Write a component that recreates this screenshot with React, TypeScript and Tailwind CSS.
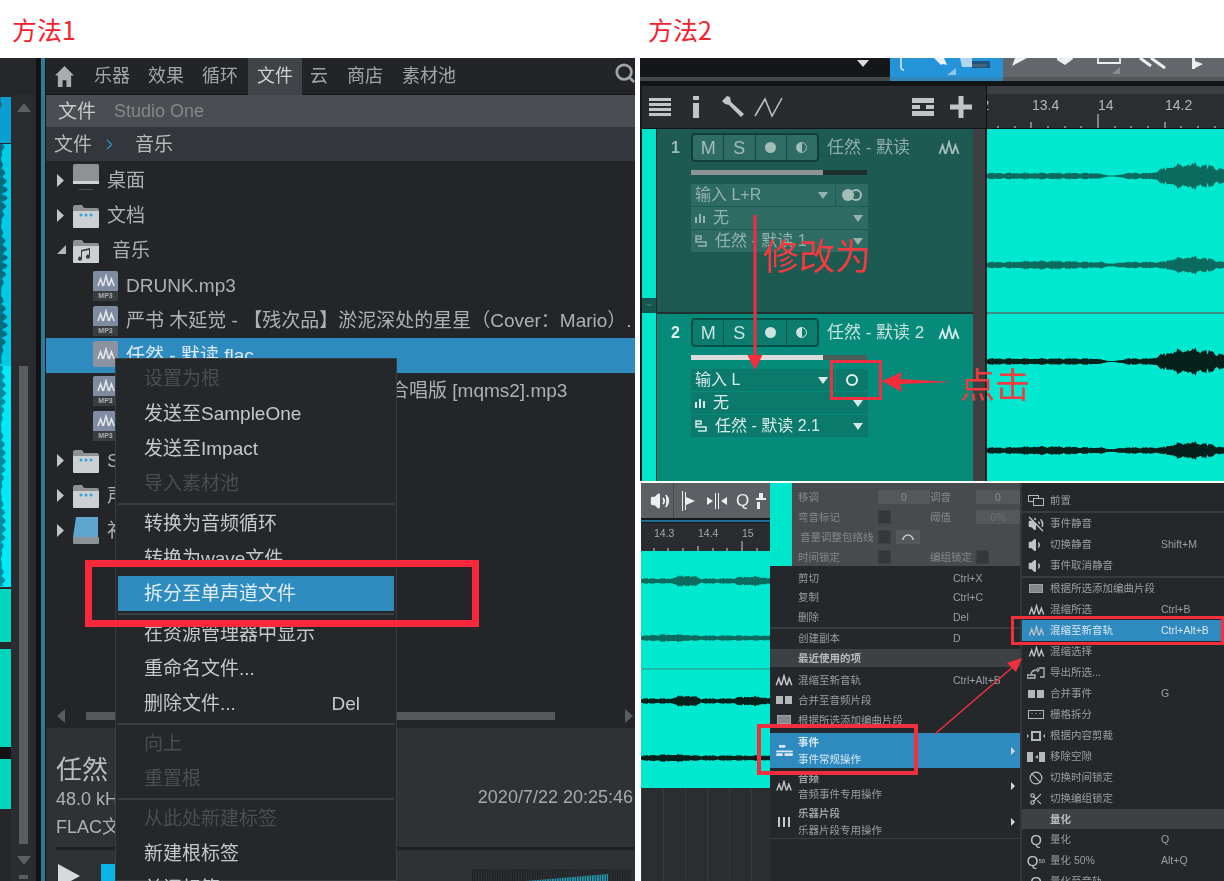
import React from 'react';
import { Search, Volume2, VolumeOff, Volume1, Ban, Scissors, ChevronRight } from 'lucide-react';

// deterministic jagged waveform, thin line with a couple of swells
const wavePath = (w: number, cy: number, base: number, swells: [number, number, number][]) => {
  const amp = (x: number) => {
    let a = base;
    for (const [c, r, h] of swells) {
      const d = Math.abs(x - c) / r;
      if (d < 1) a += h * (1 - d * d);
    }
    return Math.max(0.3, a) * (0.6 + 0.4 * Math.abs(Math.sin(x * 2.3) * Math.cos(x * 0.9 + 1)) + 0.25 * Math.abs(Math.sin(x * 0.37)));
  };
  let top = `M0 ${cy}`;
  let bottom = '';
  for (let x = 0; x <= w; x += 1.5) {
    top += `L${x} ${(cy - amp(x)).toFixed(1)}`;
    bottom = `L${x} ${(cy + amp(x)).toFixed(1)}` + bottom;
  }
  return top + bottom + 'Z';
};

// same idea for the clipped vertical wave at the far left
const stripPath = (y0: number, y1: number, base: number, peak: number) => {
  let d = `M0 ${y0}`;
  for (let y = y0; y <= y1; y += 2) {
    d += `L${(base + peak * Math.abs(Math.sin(y * 0.37) * Math.cos(y * 0.047))).toFixed(1)} ${y}`;
  }
  return d + `L0 ${y1}Z`;
};

const WaveIcon = ({ className = 'w-[20px] h-[15px]' }: { className?: string }) => (
  <svg viewBox="0 0 20 15" className={className} fill="none" stroke="currentColor" strokeWidth="1.700">
    <path d="M1 13l3-8 2.500 8M7 13l3-11 3 11M13.500 13l2.500-8 3 8" />
  </svg>
);

const Mp3Icon = ({ flac }: { flac?: boolean }) =>
  flac ? (
    <div className="w-[25px] h-[26px] shrink-0 mb-[4px] bg-[#8b93a1] rounded-[2px] flex items-center justify-center text-[#e4e7ea]">
      <WaveIcon className="w-[18px] h-[14px]" />
    </div>
  ) : (
    <div className="w-[25px] h-[30px] shrink-0 flex flex-col">
      <div className="h-[20px] bg-[#7f8ba0] rounded-t-[2px] flex items-center justify-center text-[#e4e7ea]">
        <WaveIcon className="w-[18px] h-[14px]" />
      </div>
      <div className="h-[10px] bg-[#3a3d40] text-[7px] leading-[10px] font-bold text-center text-[#aeb1b4]">MP3</div>
    </div>
  );

const Arrow = ({ open }: { open?: boolean }) =>
  open ? (
    <svg viewBox="0 0 9 9" className="w-[9px] h-[9px] shrink-0 -mt-[3px]"><path d="M9 0v9H0z" fill="#b4b7ba" /></svg>
  ) : (
    <svg viewBox="0 0 7 13" className="w-[7px] h-[13px] shrink-0"><path d="M0 0l7 6.500-7 6.500z" fill="#c2c5c8" /></svg>
  );

const TreeIcon = ({ kind }: { kind: string }) => {
  if (kind === 'desk')
    return (
      <svg viewBox="0 0 26 28" className="w-[26px] h-[28px] shrink-0 -mt-[6px]">
        <rect x="0" y="0" width="26" height="20" rx="2" fill="#8f9194" />
        <rect x="0" y="17" width="26" height="3" fill="#d1d3d5" />
        <rect x="6" y="25" width="14" height="1" fill="#4e5053" />
      </svg>
    );
  if (kind === 'drive')
    return (
      <svg viewBox="0 0 26 28" className="w-[26px] h-[28px] shrink-0">
        <path d="M3 0h22v20H0z" fill="#5fa6cf" />
        <rect x="0" y="20" width="26" height="7" rx="1" fill="#8b9296" />
      </svg>
    );
  return (
    <svg viewBox="0 0 26 24" className="w-[26px] h-[24px] shrink-0">
      <path d="M0 3q0-2 2-2h7l2 3h13q2 0 2 2v2H0z" fill="#8e9194" />
      <rect x="0" y="7" width="26" height="17" rx="1" fill="#cdd0d2" />
      {kind === 'music' ? (
        <path d="M9 20a2 2 0 1 1-1-2v-7l9-2v9a2 2 0 1 1-1-2v-5l-7 1.500z" fill="#3a3c3f" />
      ) : (
        <g fill="#2ea7d8"><circle cx="8" cy="11" r="1.500" /><circle cx="13" cy="11" r="1.500" /><circle cx="18" cy="11" r="1.500" /></g>
      )}
    </svg>
  );
};

const Tree = ({ kind, text, open, nudge }: { kind: string; text: string; open?: boolean; nudge?: boolean }) => (
  <div className="h-[35px] flex items-center pl-[11px]">
    <div className="w-[16px] flex items-center"><Arrow open={open} /></div>
    <TreeIcon kind={kind} />
    <span className={nudge ? 'ml-[13px]' : 'ml-[8px]'}>{text}</span>
  </div>
);

const FileRow = ({ text, selected, gap }: { text: string; selected?: boolean; gap?: boolean }) => (
  <div className={`h-[35px] flex items-center pl-[47px] whitespace-nowrap overflow-hidden ${selected ? 'bg-[#2e8bc0] text-[#dbe9f2]' : ''}`}>
    <Mp3Icon flac={selected} />
    <span className={gap ? 'ml-[272px]' : 'ml-[8px]'}>{text}</span>
  </div>
);

const MenuRow = ({ text, off, hot, right, cut }: { text: string; off?: boolean; hot?: boolean; right?: string; cut?: boolean }) => (
  <div className={`${cut ? 'h-[20px] items-start leading-[35px] overflow-hidden mb-[15px]' : 'h-[35px] items-center'} flex pl-[26px] mx-[2px] whitespace-nowrap ${off ? 'text-[#4b4e51]' : 'text-[#c6c8ca]'} ${hot ? 'bg-[#2f8cc1] text-[#e2eef6]' : ''}`}>
    <span>{text}</span>
    {right && <span className="ml-auto mr-[34px]">{right}</span>}
  </div>
);

const MenuSep = () => (
  <div className="h-[5px] flex items-center mx-[2px]"><div className="h-[2px] w-full bg-[#3b3e41]" /></div>
);

const Strip = () => (
  <svg viewBox="0 0 11 823" className="w-[11px] h-[823px] shrink-0">
    <rect width="11" height="823" fill="#25272a" />
    <rect y="39" width="11" height="46" fill="#0a9fd2" />
    <path d={stripPath(39, 50, 0, 3)} fill="#2b5f73" />
    <rect y="86" width="11" height="222" fill="#00cbe6" />
    <path d={stripPath(86, 306, 1, 7)} fill="#066c80" />
    <rect y="308" width="11" height="221" fill="#00e9f6" />
    <path d={stripPath(308, 528, 1, 5)} fill="#078a9e" />
    <rect y="531" width="11" height="53" fill="#00d6bc" />
    <rect y="591" width="11" height="98" fill="#00d6bc" />
    <rect y="689" width="11" height="12" fill="#101213" />
    <rect y="701" width="11" height="50" fill="#00d6bc" />
  </svg>
);

const MethodOne = () => (
  <div className="w-[635px] h-[823px] flex overflow-hidden relative text-[19px] leading-none bg-[#232528] text-[#aeb1b4] blur-[0.5px]">
    <Strip />
    <div className="w-[25px] bg-[#2a2c2f] flex flex-col items-center border-t-[37px] border-[#25272a] pt-[8px]">
      <div className="w-0 h-0 border-x-[7px] border-x-transparent border-b-[9px] border-b-[#5d6063]" />
      <div className="w-[9px] h-[478px] bg-[#5b5e61] mt-[254px]" />
      <div className="w-0 h-0 border-x-[7px] border-x-transparent border-t-[9px] border-t-[#5d6063] mt-[12px]" />
      <div className="w-[9px] h-[4px] bg-[#5b5e61] mt-[10px]" />
    </div>
    <div className="w-[10px] flex">
      <div className="w-[5px] bg-[#101214]" />
      <div className="w-[4px] bg-[#2b7d96]" />
      <div className="w-[1px] bg-[#17191b]" />
    </div>
    <div className="flex-1 flex flex-col min-w-0">
      <div className="h-[37px] flex items-center pl-[9px] shrink-0 bg-[#222427] border-b border-[#131517] text-[#a2a5a8] text-[18px]">
        <svg viewBox="0 0 20 22" className="w-[19px] h-[21px] text-[#a9acae]"><path d="M10 0l10 10h-3v12h-5v-7H8v7H3V10H0z" fill="currentColor" /></svg>
        <span className="ml-[20px]">乐器</span>
        <span className="ml-[18px]">效果</span>
        <span className="ml-[18px]">循环</span>
        <span className="ml-[10px] w-[54px] h-[37px] flex items-center justify-center bg-[#404347] text-[#cfd1d3]">文件</span>
        <span className="ml-[8px]">云</span>
        <span className="ml-[19px]">商店</span>
        <span className="ml-[19px]">素材池</span>
        <Search size={22} strokeWidth={3} className="ml-auto -mr-[1px] -mt-[6px]" />
      </div>
      <div className="h-[32px] flex items-center pl-[12px] shrink-0 bg-[#4a4e52]">
        <span className="text-[#c9cbcd]">文件</span>
        <span className="ml-[18px] text-[#85888b] text-[18px]">Studio One</span>
      </div>
      <div className="h-[34px] flex items-center pl-[8px] shrink-0 bg-[#33363a] text-[#b9bbbd]">
        <span>文件</span>
        <ChevronRight size={17} className="ml-[9px] text-[#2b8ec4]" />
        <span className="ml-[17px]">音乐</span>
      </div>
      <div className="h-[543px] pt-[2px] shrink-0 overflow-hidden">
        <Tree kind="desk" text="桌面" />
        <Tree kind="docs" text="文档" />
        <Tree kind="music" text="音乐" open nudge />
        <FileRow text="DRUNK.mp3" />
        <FileRow text="严书 木延觉 - 【残次品】淤泥深处的星星（Cover：Mario）." />
        <FileRow text="任然 - 默读.flac" selected />
        <FileRow text="合唱版 [mqms2].mp3" gap />
        <FileRow text="" />
        <Tree kind="docs" text="Studio One" />
        <Tree kind="docs" text="声音" />
        <Tree kind="drive" text="补丁" />
      </div>
      <div className="h-[24px] flex items-center pl-[11px] pr-[2px] shrink-0 text-[#5a5d60]">
        <svg viewBox="0 0 8 14" className="w-[8px] h-[14px]"><path d="M8 0L0 7l8 7z" fill="currentColor" /></svg>
        <div className="h-[8px] w-[469px] ml-[21px] bg-[#55585b]" />
        <svg viewBox="0 0 8 14" className="w-[8px] h-[14px] ml-auto"><path d="M0 0l8 7-8 7z" fill="currentColor" /></svg>
      </div>
      <div className="flex-1 bg-[#2f3235] flex flex-col pl-[10px] text-[18px]">
        <div className="flex justify-between">
          <div className="pt-[27px]">
            <div className="h-[30px] text-[26px] leading-[30px] text-[#babcbe]">任然 -</div>
            <div className="h-[28px] leading-[28px]">48.0 kHz</div>
            <div className="h-[28px] leading-[28px]">FLAC文件</div>
          </div>
          <div className="pt-[60px] pr-[2px] text-[18px] text-[#a6a9ab]">2020/7/22 20:25:46</div>
        </div>
        <div className="h-[3px] mt-[6px] bg-[#1e2022]" />
        <div className="flex items-start flex-1 pt-[14px]">
          <svg viewBox="0 0 22 24" className="w-[22px] h-[24px] ml-[2px]"><path d="M0 0l22 12L0 24z" fill="#d7d9db" /></svg>
          <div className="w-[14px] h-[20px] ml-[21px] bg-[#08b5e6]" />
          <svg viewBox="0 0 160 14" className="ml-auto mt-[5px] w-[160px] h-[14px] mr-[3px]">
            <rect width="160" height="14" fill="url(#s1)" />
            <defs>
              <pattern id="s1" width="2.500" height="14" patternUnits="userSpaceOnUse"><rect width="1.200" height="14" fill="#1e2124" /></pattern>
              <pattern id="s2" width="2.500" height="14" patternUnits="userSpaceOnUse"><rect width="1.600" height="14" fill="#1a9db8" /></pattern>
            </defs>
            <path d="M30 14L136 5v9z" fill="url(#s2)" />
          </svg>
        </div>
      </div>
    </div>

    {/* context menu */}
    <div className="absolute left-[115px] top-[300px] w-[282px] h-[523px] pt-[2px] bg-[#25282b] border border-[#3a3d40]">
      <MenuRow text="设置为根" off />
      <MenuRow text="发送至SampleOne" />
      <MenuRow text="发送至Impact" />
      <MenuRow text="导入素材池" off />
      <MenuSep />
      <MenuRow text="转换为音频循环" />
      <MenuRow text="转换为wave文件" cut />
      <MenuRow text="拆分至单声道文件" hot />
      <MenuSep />
      <MenuRow text="在资源管理器中显示" />
      <MenuRow text="重命名文件..." />
      <MenuRow text="删除文件..." right="Del" />
      <MenuSep />
      <MenuRow text="向上" off />
      <MenuRow text="重置根" off />
      <MenuSep />
      <MenuRow text="从此处新建标签" off />
      <MenuRow text="新建根标签" />
      <MenuRow text="关闭标签" />
    </div>
    <div className="absolute left-[85px] top-[502px] w-[394px] h-[67px] border-[7px] border-[#f9283b]" />
  </div>
);

const SelectRow = ({ icon, text, tone }: { icon?: React.ReactNode; text: string; tone: string }) => (
  <div className={`h-[22px] flex items-center pl-[4px] pr-[4px] mb-[1px] ${tone}`}>
    {icon}
    <span className={icon ? 'ml-[8px]' : ''}>{text}</span>
    <div className="ml-auto w-0 h-0 border-x-[5px] border-x-transparent border-t-[7px] border-t-current mr-[1px]" />
  </div>
);

const BarsIcon = () => (
  <svg viewBox="0 0 10 10" className="w-[10px] h-[10px]" fill="currentColor"><path d="M0 4h2v6H0zM4 1h2v9H4zM8 3h2v7H8z" /></svg>
);
const RouteIcon = () => (
  <svg viewBox="0 0 12 12" className="w-[12px] h-[12px]" fill="none" stroke="currentColor" strokeWidth="1.500"><path d="M1 1h5v3H1zM1 4v3h10v4H3" /></svg>
);

const Track = ({ n, name, input, out, lit }: { n: number; name: string; input: string; out: string; lit?: boolean }) => {
  const tone = lit ? 'bg-[#0b7a6d] text-[#d6ebe7]' : 'bg-[#2e6b63] text-[#95b3ae]';
  const cell = `flex-1 h-full flex items-center justify-center border-l first:border-l-0 ${lit ? 'border-[#05574d] text-[#cbe3df]' : 'border-[#164a43] text-[#a5bdb9]'}`;
  return (
    <div className={`${lit ? 'h-[168px] bg-[#068b7b]' : 'h-[185px] bg-[#1c5a52] border-b-2 border-[#21302e]'} shrink-0 pt-[4px] text-[16px] leading-none`}>
      <div className="flex items-center h-[29px]">
        <div className={`w-[34px] pl-[14px] font-bold ${lit ? 'text-[#e0efec]' : 'text-[#9bb8b3]'}`}>{n}</div>
        <div className={`w-[128px] h-full flex rounded-[4px] border-2 text-[18px] ${lit ? 'bg-[#0c7c6f] border-[#055046]' : 'bg-[#2f6c64] border-[#123f39]'}`}>
          <div className={cell}>M</div>
          <div className={cell}>S</div>
          <div className={cell}><div className="w-[11px] h-[11px] rounded-full bg-current" /></div>
          <div className={cell}><div className="w-[11px] h-[11px] rounded-full border border-current bg-[linear-gradient(90deg,currentColor_50%,transparent_50%)]" /></div>
        </div>
        <span className={`ml-[8px] text-[17px] ${lit ? 'text-[#cbe3df]' : 'text-[#8fafa9]'}`}>{name}</span>
        <WaveIcon className={`ml-auto mr-[13px] w-[22px] h-[16px] ${lit ? 'text-[#d6ebe7]' : 'text-[#a5bdb9]'}`} />
      </div>
      <div className={`ml-[34px] w-[176px] h-[5px] mt-[8px] ${lit ? 'bg-[#4a5f5c]' : 'bg-[#1d2e2d]'}`}>
        <div className={`h-full w-[132px] ${lit ? 'bg-[#d9dcdb]' : 'bg-[#8e9496]'}`} />
      </div>
      <div className="ml-[34px] w-[177px] mt-[9px]">
        <div className="flex h-[22px] mb-[1px]">
          <div className={`flex-1 flex items-center pl-[4px] pr-[7px] ${tone}`}>
            <span>{input}</span>
            <div className="ml-auto w-0 h-0 border-x-[5px] border-x-transparent border-t-[7px] border-t-current" />
          </div>
          <div className={`w-[32px] ml-[1px] flex items-center justify-center ${tone}`}>
            {lit ? (
              <div className="w-[12px] h-[12px] rounded-full border-2 border-[#e5f1ef]" />
            ) : (
              <div className="flex">
                <div className="w-[12px] h-[12px] rounded-full bg-[#a5bdb9]" />
                <div className="w-[12px] h-[12px] -ml-[4px] rounded-full border-2 border-[#a5bdb9]" />
              </div>
            )}
          </div>
        </div>
        <SelectRow icon={<BarsIcon />} text="无" tone={tone} />
        <SelectRow icon={<RouteIcon />} text={out} tone={tone} />
      </div>
    </div>
  );
};

const TrackWave = ({ h, y1, y2, fill }: { h: number; y1: number; y2: number; fill: string }) => (
  <svg viewBox={`0 0 237 ${h}`} className="w-full h-full block">
    <path d={wavePath(237, y1, 3, [[125, 14, -2.5], [205, 40, 9]])} fill={fill} />
    <path d={wavePath(237, y2, 3, [[125, 10, -1.5], [205, 30, 5], [60, 40, 1]])} fill={fill} />
  </svg>
);

const MethodTwoTop = () => (
  <div className="h-[423px] flex flex-col overflow-hidden relative bg-[#15171a] blur-[0.4px]">
    <div className="h-[23px] flex shrink-0">
      <div className="w-[250px] flex items-start justify-end pr-[21px] bg-[#14161a] border-b-[4px] border-[#45484b]">
        <div className="w-0 h-0 mt-[2px] border-x-[6px] border-x-transparent border-t-[7px] border-t-[#d9dbdd]" />
      </div>
      <svg viewBox="0 0 113 23" className="w-[113px] h-[23px]">
        <rect width="113" height="23" fill="#2493d8" />
        <rect y="19" width="113" height="4" fill="#2f87bc" />
        <path d="M11 0v9q0 3 3 3" fill="none" stroke="#dfeaf2" strokeWidth="1.500" />
        <path d="M44 0h10l3 7-4-1-2 1z" fill="#eaf2f7" />
        <path d="M70 0h12v6h15V9H72z" fill="#d5e6f1" opacity=".8" />
        <path d="M82 3h18v7H82z" fill="#1c3f5a" opacity=".75" />
        <path d="M66 10v7h-9z" fill="#8fc4e4" />
      </svg>
      <svg viewBox="0 0 221 23" className="flex-1 h-[23px]">
        <rect width="221" height="23" fill="#63676b" />
        <rect y="19" width="221" height="4" fill="#54585b" />
        <path d="M9 8L24 0H12z" fill="#eceeef" />
        <path d="M54 2l8 5 8-6V0H54z" fill="#eceeef" />
        <path d="M95 0v5h22V0" fill="none" stroke="#eceeef" strokeWidth="1.800" />
        <path d="M117 9v7h-8z" fill="#8a8e91" />
        <path d="M137 0l11 8M148 0l14 10" stroke="#eceeef" strokeWidth="3" />
        <path d="M189 0h3v11h-3zM192 3l8 3-8 4z" fill="#eceeef" />
      </svg>
    </div>
    <div className="h-[5px] shrink-0 bg-[#121416]" />
    <div className="h-[43px] flex shrink-0 ml-[2px] border-b border-[#121416]">
      <div className="w-[345px] bg-[#292b2e] flex items-center pl-[7px] text-[#c2c4c6] border-r border-[#0c0e10]">
        <svg viewBox="0 0 22 18" className="w-[22px] h-[18px]" fill="currentColor"><path d="M0 0h22v3H0zM0 5h22v3H0zM0 10h22v3H0zM0 15h22v3H0z" /></svg>
        <svg viewBox="0 0 6 22" className="w-[6px] h-[22px] ml-[22px]" fill="currentColor"><path d="M0 0h6v4H0zM0 7h6v15H0z" /></svg>
        <svg viewBox="0 0 22 22" className="w-[22px] h-[22px] ml-[23px]" fill="currentColor"><path d="M0 5l5-5 3 1 1 5 13 12-3 3L7 9 3 8z" /></svg>
        <svg viewBox="0 0 30 22" className="w-[30px] h-[22px] ml-[10px]" fill="none" stroke="currentColor" strokeWidth="1.500"><path d="M1 20L11 3l7 17L28 2" /></svg>
        <svg viewBox="0 0 22 18" className="w-[22px] h-[18px] ml-[128px]" fill="currentColor"><path d="M0 0h22v5H0zM0 7h8v4H0zM14 7h8v4h-8zM0 13h22v5H0z" /></svg>
        <svg viewBox="0 0 22 22" className="w-[22px] h-[22px] ml-[16px]" fill="currentColor"><path d="M8.500 0h5v8.500H22v5h-8.500V22h-5v-8.500H0v-5h8.500z" /></svg>
      </div>
      <svg viewBox="0 0 237 42" className="flex-1 h-full bg-[#2b2d30]">
        <rect width="237" height="8" fill="#3c3f42" />
        <g fill="#b5b8ba" fontSize="14" fontFamily="Liberation Sans">
          <text x="-25" y="24">13.2</text>
          <text x="45" y="24">13.4</text>
          <text x="111" y="24">14</text>
          <text x="178" y="24">14.2</text>
        </g>
        <path d="M11 42v-2M28 42v-2M44 42v-6M61 42v-2M78 42v-2M94 42v-2M111 42v-14M128 42v-2M144 42v-2M161 42v-2M178 42v-6M194 42v-2M211 42v-2M228 42v-2" stroke="#d4d6d8" />
      </svg>
    </div>
    <div className="flex-1 flex ml-[2px] bg-[#3b3e40]">
      <div className="w-[14px] bg-[#00e6cd] shrink-0 flex flex-col justify-start">
        <div className="h-[169px]" />
        <div className="h-[15px] bg-[#17564e] text-[#4a8f86] text-[10px] leading-[15px] text-center">~</div>
      </div>
      <div className="w-[1px] bg-[#1b2d2c] shrink-0" />
      <div className="w-[316px] shrink-0 flex flex-col">
        <Track n={1} name="任然 - 默读" input="输入 L+R" out="任然 - 默读 1" />
        <Track n={2} name="任然 - 默读 2" input="输入 L" out="任然 - 默读 2.1" lit />
      </div>
      <div className="w-[14px] bg-[#3d4042] border-r-[2px] border-[#1c1e20] shrink-0" />
      <div className="flex-1 flex flex-col min-w-0 bg-[#00e8cf]">
        <div className="h-[185px] shrink-0 border-b-2 border-[#3a8f85]"><TrackWave h={183} y1={47} y2={136} fill="#0b6b5f" /></div>
        <div className="flex-1"><TrackWave h={167} y1={47} y2={136} fill="#06201c" /></div>
      </div>
    </div>

    {/* annotations */}
    <svg viewBox="0 0 584 423" className="absolute inset-0 w-[584px] h-[423px] pointer-events-none">
      <path d="M113.500 157h3v140h6L115 312l-7.500-15h6z" fill="#f62c3d" />
      <path d="M242 323l20-9-2 7 52 3-52 2 2 8z" fill="#f62c3d" />
    </svg>
    <div className="absolute left-[123px] top-[180px] text-[36px] leading-[40px] text-[#f03b3f]">修改为</div>
    <div className="absolute left-[320px] top-[308px] text-[35px] leading-[40px] text-[#f03b3f]">点击</div>
    <div className="absolute left-[190px] top-[302px] w-[52px] h-[40px] border-[3px] border-[#f0303f]" />
  </div>
);

const InputBox = ({ v, dim }: { v: string; dim?: boolean }) => (
  <div className={`h-[14px] bg-[#55585b] flex items-center justify-center ${dim ? 'text-[#6b6e71]' : 'text-[#8a8d90]'}`}>{v}</div>
);
const Check = () => <div className="w-[13px] h-[14px] bg-[#35383b] border border-[#3d4043]" />;

const CtxRow = ({ icon, text, key2, h = 'h-[20px]' }: { icon?: React.ReactNode; text: string; key2?: string; h?: string }) => (
  <div className={`${h} shrink-0 flex items-center relative`}>
    <div className="w-[28px] flex justify-center text-[#c5c7c9]">{icon}</div>
    <span>{text}</span>
    {key2 && <span className="absolute left-[183px]">{key2}</span>}
  </div>
);

const CtxTwoLine = ({ icon, title, sub, hot, h }: { icon: React.ReactNode; title: string; sub: string; hot?: boolean; h: string }) => (
  <div className={`${h} shrink-0 flex items-center ${hot ? 'bg-[#2f8abf] text-[#d9e8f2]' : ''}`}>
    <div className="w-[28px] flex justify-center text-[#c5c7c9]">{icon}</div>
    <div className="flex-1 flex flex-col gap-[6px]">
      <span className="font-bold">{title}</span>
      <span>{sub}</span>
    </div>
    <div className="w-0 h-0 mr-[5px] border-y-[4px] border-y-transparent border-l-[4px] border-l-[#d5d7d9]" />
  </div>
);

const Blocks = ({ kind }: { kind: string }) => {
  if (kind === 'merge') return <svg viewBox="0 0 16 8" className="w-[16px] h-[8px]"><path d="M0 0h7v8H0zM9 0h7v8H9z" fill="#b5b7b9" /></svg>;
  if (kind === 'solid') return <svg viewBox="0 0 14 9" className="w-[14px] h-[9px]"><rect width="14" height="9" fill="#85888b" stroke="#b5b7b9" /></svg>;
  if (kind === 'event') return <svg viewBox="0 0 18 12" className="w-[17px] h-[11px]" fill="#d9e7f0"><path d="M3 0h7v3H3zM0 6h18v2H0zM0 9h7v3H0zM9 9h9v3H9z" /></svg>;
  if (kind === 'keys') return <svg viewBox="0 0 12 10" className="w-[12px] h-[10px]" fill="#c5c7c9"><path d="M0 0h2v10H0zM5 0h2v10H5zM10 0h2v10h-2z" /></svg>;
  if (kind === 'front') return <svg viewBox="0 0 16 11" className="w-[16px] h-[11px]" fill="none" stroke="#b5b7b9"><rect x=".5" y=".5" width="10" height="6" /><rect x="5.500" y="3.500" width="10" height="7" fill="#25282b" /></svg>;
  if (kind === 'export') return <svg viewBox="0 0 18 12" className="w-[18px] h-[12px]" fill="none" stroke="#b5b7b9" strokeWidth="1.300"><path d="M0 11h8v-3H0zM4 7q1-4 6-4M10 1l2 2-2 2M12 1h5v9h-4" /></svg>;
  if (kind === 'grid') return <svg viewBox="0 0 16 11" className="w-[16px] h-[11px]" fill="none" stroke="#b5b7b9"><rect x=".5" y="1.500" width="15" height="8" /><path d="M4 4v1M8 4v1M12 4v1" /></svg>;
  if (kind === 'crop') return <svg viewBox="0 0 18 10" className="w-[18px] h-[10px]" fill="#b5b7b9"><path d="M0 3l2 2-2 2zM18 3l-2 2 2 2zM4 0h10v10H4z" /><rect x="6" y="2" width="6" height="6" fill="#25282b" /></svg>;
  return <svg viewBox="0 0 18 10" className="w-[18px] h-[10px]" fill="#b5b7b9"><path d="M0 0h6v10H0zM12 0h6v10h-6z" /><path d="M11 3L8 5l3 2z" /></svg>;
};

const IconSm = ({ children }: { children: React.ReactNode }) => <span className="flex items-center justify-center">{children}</span>;

const rightMenu: { t: string; k?: string; i?: React.ReactNode; hot?: boolean }[] = [
  { t: '根据所选添加编曲片段', i: <Blocks kind="solid" /> },
  { t: '混缩所选', k: 'Ctrl+B', i: <WaveIcon className="w-[17px] h-[12px]" /> },
  { t: '混缩至新音轨', k: 'Ctrl+Alt+B', i: <WaveIcon className="w-[17px] h-[12px]" />, hot: true },
  { t: '混缩选择', i: <WaveIcon className="w-[17px] h-[12px]" /> },
  { t: '导出所选...', i: <Blocks kind="export" /> },
  { t: '合并事件', k: 'G', i: <Blocks kind="merge" /> },
  { t: '栅格拆分', i: <Blocks kind="grid" /> },
  { t: '根据内容剪裁', i: <Blocks kind="crop" /> },
  { t: '移除空隙', i: <Blocks kind="gap" /> },
  { t: '切换时间锁定', i: <Ban size={14} /> },
  { t: '切换编组锁定', i: <Scissors size={14} /> },
];

const RightRow = ({ t, k, i, hot }: { t: string; k?: string; i?: React.ReactNode; hot?: boolean }) => (
  <div className={`h-[21px] shrink-0 flex items-center relative ${hot ? 'bg-[#2f8abf] text-[#d9e8f2]' : ''}`}>
    <div className="w-[28px] flex justify-center text-[#c0c2c4]">{i}</div>
    <span>{t}</span>
    {k && <span className="absolute left-[139px]">{k}</span>}
  </div>
);

const MethodTwoBottom = () => (
  <div className="h-[398px] mt-[2px] flex overflow-hidden relative text-[10.5px] leading-none text-[#9b9ea1] bg-[#25282b] blur-[0.3px]">
    <div className="w-[1px] bg-white" />
    <div className="w-[129px] flex flex-col shrink-0">
      <div className="h-[35px] bg-[#5c6064] flex items-center pl-[9px] text-[#eceeef] shrink-0">
        <Volume2 size={20} fill="currentColor" />
        <div className="w-[1px] h-full ml-[3px] bg-[#484b4e]" />
        <svg viewBox="0 0 18 20" className="w-[18px] h-[20px] ml-[7px]" fill="currentColor"><path d="M1 0h1v20H1zM4 1h1v18H4zM5 6l9 4-9 4z" /></svg>
        <svg viewBox="0 0 20 16" className="w-[20px] h-[16px] ml-[8px]" fill="currentColor"><path d="M0 4l6 4-6 4zM20 4l-6 4 6 4zM8 0h1v16H8zM11 0h1v16h-1z" /></svg>
        <span className="text-[17px] ml-[9px]">Q</span>
        <svg viewBox="0 0 10 16" className="w-[10px] h-[16px] ml-[7px]" fill="currentColor"><path d="M3 0h4v5h3v2H0V5h3zM1 9h3v7H1z" /></svg>
      </div>
      <div className="h-[5px] shrink-0 bg-[#16181a] flex items-center"><div className="h-[2px] w-full bg-[#1f6f93]" /></div>
      <div className="h-[28px] bg-[#2a2c2f] shrink-0">
        <svg viewBox="0 0 129 28" className="w-[129px] h-[28px]">
          <g fill="#a5a8aa" fontSize="10.500" fontFamily="Liberation Sans">
            <text x="13" y="14">14.3</text>
            <text x="57" y="14">14.4</text>
            <text x="101" y="14">15</text>
          </g>
          <path d="M13 28v-3M27 28v-3M42 28v-3M57 28v-5M72 28v-3M86 28v-3M101 28v-10M116 28v-3" stroke="#c8cacc" />
        </svg>
      </div>
      <div className="h-[237px] bg-[#00e8cf] shrink-0">
        <svg viewBox="0 0 129 237" className="w-full h-full block">
          <path d={wavePath(129, 30, 2.500, [[45, 15, 3], [110, 20, 2]])} fill="#0b6b5f" />
          <path d={wavePath(129, 87, 2.500, [[30, 25, 1]])} fill="#0b6b5f" />
          <path d="M0 118h129" stroke="#2d8e83" />
          <path d={wavePath(129, 150, 2.500, [[45, 15, 3], [110, 20, 2]])} fill="#06201c" />
          <path d={wavePath(129, 207, 2.500, [[30, 25, 1]])} fill="#06201c" />
        </svg>
      </div>
      <div className="flex-1 bg-[#2b2d30] bg-[repeating-linear-gradient(90deg,#36393c_0,#36393c_1px,transparent_1px,transparent_22px)]" />
    </div>

    {/* event context menu */}
    <div className="w-[250px] shrink-0 flex flex-col relative h-[356px] bg-[#25282b] border-b border-[#3a3d40]">
      <div className="h-[83px] flex shrink-0">
        <div className="w-[22px] bg-[#00e6cd]" />
        <div className="flex-1 bg-[#484b4e] pt-[4px] pl-[6px] text-[#85888b] whitespace-nowrap">
          <div className="grid grid-cols-[80px_52px_46px_1fr] grid-rows-[20px_20px_20px_20px] items-center">
            <span>移调</span><InputBox v="0" /><span>调音</span><InputBox v="0" />
            <span>弯音标记</span><Check /><span>阈值</span><InputBox v="0%" dim />
            <span className="pl-[2px]">音量调整包络线</span>
            <div className="flex items-center gap-[5px]"><Check /><div className="w-[24px] h-[14px] bg-[#55585b] flex items-center justify-center"><svg viewBox="0 0 12 6" className="w-[12px] h-[6px]"><path d="M1 6a5 5 0 0 1 10 0" fill="none" stroke="#c5c7c9" strokeWidth="1.500" /></svg></div></div>
            <span /><span />
            <span>时间锁定</span><Check /><span>编组锁定</span><Check />
          </div>
        </div>
      </div>
      <div className="relative flex-1 flex flex-col pt-[2px]">
        <CtxRow h="h-[19.5px]" text="剪切" key2="Ctrl+X" />
        <CtxRow h="h-[19.5px]" text="复制" key2="Ctrl+C" />
        <CtxRow h="h-[19.5px]" text="删除" key2="Del" />
        <div className="h-[2px] shrink-0 bg-[#393c3f]" />
        <CtxRow h="h-[19.5px]" text="创建副本" key2="D" />
        <div className="h-[18px] mt-[1px] mb-[3px] shrink-0 bg-[#3e4144] pl-[28px] flex items-center font-bold text-[#b9bbbd]">最近使用的项</div>
        <CtxRow text="混缩至新音轨" key2="Ctrl+Alt+B" icon={<WaveIcon className="w-[18px] h-[13px]" />} />
        <CtxRow text="合并至音频片段" icon={<Blocks kind="merge" />} />
        <div className="h-[15px] shrink-0 overflow-hidden flex items-start pt-[5px] mb-[8px]">
          <div className="w-[28px] flex justify-center"><Blocks kind="solid" /></div>
          <span>根据所选添加编曲片段</span>
        </div>
        <CtxTwoLine h="h-[35px]" hot icon={<Blocks kind="event" />} title="事件" sub="事件常规操作" />
        <CtxTwoLine h="h-[36px]" icon={<WaveIcon className="w-[16px] h-[12px]" />} title="音频" sub="音频事件专用操作" />
        <CtxTwoLine h="h-[35px]" icon={<Blocks kind="keys" />} title="乐器片段" sub="乐器片段专用操作" />
      </div>
    </div>

    <div className="w-[2px] shrink-0 bg-[#35383b]" />

    {/* edit submenu */}
    <div className="flex-1 min-w-0 flex flex-col overflow-hidden">
      <div className="h-[7px] shrink-0" />
      <RightRow t="前置" i={<Blocks kind="front" />} />
      <div className="h-[2px] shrink-0 bg-[#393c3f]" />
      <RightRow t="事件静音" i={<IconSm><VolumeOff size={16} fill="currentColor" /></IconSm>} />
      <RightRow t="切换静音" k="Shift+M" i={<IconSm><Volume1 size={16} fill="currentColor" /></IconSm>} />
      <RightRow t="事件取消静音" i={<IconSm><Volume1 size={16} fill="currentColor" /></IconSm>} />
      <div className="h-[2px] shrink-0 bg-[#393c3f]" />
      {rightMenu.map(r => <RightRow key={r.t} {...r} />)}
      <div className="h-[20px] shrink-0 bg-[#3e4144] pl-[28px] flex items-center font-bold text-[#b9bbbd]">量化</div>
      <RightRow t="量化" k="Q" i={<span className="text-[15px] text-[#c0c2c4]">Q</span>} />
      <RightRow t="量化 50%" k="Alt+Q" i={<span className="text-[15px] text-[#c0c2c4]">Q<sup className="text-[6px]">50</sup></span>} />
      <RightRow t="量化至音轨" i={<span className="text-[15px] text-[#c0c2c4]">Q</span>} />
    </div>

    {/* annotations */}
    <div className="absolute left-[117px] top-[241px] w-[161px] h-[51px] border-[4px] border-[#f0303f]" />
    <div className="absolute left-[371px] top-[133px] w-[213px] h-[29px] border-[3px] border-[#f0303f]" />
    <svg viewBox="0 0 584 398" className="absolute inset-0 w-[584px] h-[398px] pointer-events-none">
      <path d="M295 251L374 183" stroke="#f0303f" strokeWidth="1.500" />
      <path d="M382 175l-15 5 9 9z" fill="#f0303f" />
    </svg>
  </div>
);

export default function App() {
  return (
    <div className="w-[1224px] h-[881px] overflow-hidden bg-white font-['Liberation_Sans','Noto_Sans_CJK_SC',sans-serif]">
      <div className="h-[58px] flex text-[25px] leading-none text-[#f5222d] font-['Noto_Sans_CJK_SC',sans-serif]">
        <div className="w-[640px] pl-[12px] pt-[17px]">方法1</div>
        <div className="pl-[8px] pt-[17px]">方法2</div>
      </div>
      <div className="flex h-[823px] gap-[5px]">
        <MethodOne />
        <div className="w-[584px] flex flex-col">
          <MethodTwoTop />
          <MethodTwoBottom />
        </div>
      </div>
    </div>
  );
}
